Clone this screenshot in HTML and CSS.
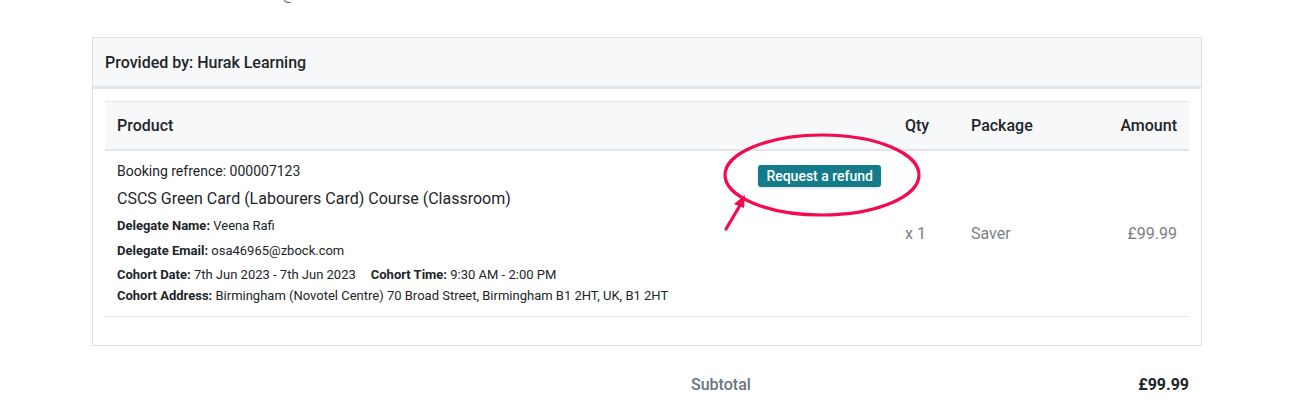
FILE: index.html
```html
<!DOCTYPE html>
<html>
<head>
<meta charset="utf-8">
<link rel="stylesheet" href="styles.css">
</head>
<body>
<div class="page">
  <div class="top-line"><span class="top-text">osa46965@zbock.com</span></div>
  <div class="card">
    <div class="card-header">Provided by: Hurak Learning</div>
    <div class="card-body">
      <div class="table">
        <div class="thead">
          <div class="th">Product</div>
          <div class="th">Qty</div>
          <div class="th">Package</div>
          <div class="th right">Amount</div>
        </div>
        <div class="trow">
          <div class="td product">
            <button class="refund">Request a refund</button>
            <div class="ref">Booking refrence: 000007123</div>
            <div class="title">CSCS Green Card (Labourers Card) Course (Classroom)</div>
            <div class="meta first"><b>Delegate Name:</b> Veena Rafi</div>
            <div class="meta"><b>Delegate Email:</b> osa46965@zbock.com</div>
            <div class="meta tight"><span class="pair"><b>Cohort Date:</b> 7th Jun 2023 - 7th Jun 2023</span><span class="pair"><b>Cohort Time:</b> 9:30 AM - 2:00 PM</span></div>
            <div class="meta tight2"><b>Cohort Address:</b> Birmingham (Novotel Centre) 70 Broad Street, Birmingham B1 2HT, UK, B1 2HT</div>
            <svg class="annot" width="220" height="110" viewBox="0 0 220 110">
              <ellipse cx="105" cy="42" rx="97" ry="40" fill="none" stroke="#f5094f" stroke-width="3.2"/>
              <line x1="9" y1="96" x2="25" y2="69" stroke="#f5094f" stroke-width="3.2" stroke-linecap="round"/>
              <polygon points="28,62 17,71 27,75" fill="#f5094f"/>
            </svg>
          </div>
          <div class="td muted mid">x 1</div>
          <div class="td muted mid">Saver</div>
          <div class="td muted mid right">£99.99</div>
        </div>
      </div>
    </div>
  </div>
  <div class="totals">
    <div class="label">Subtotal</div>
    <div class="value">£99.99</div>
  </div>
</div>
</body>
</html>
```

FILE: styles.css
```css
* { box-sizing: border-box; }
html, body { margin: 0; padding: 0; background: #fff; }
body {
  font-family: Roboto, "Liberation Sans", Arial, sans-serif;
  color: #212529;
  width: 1306px;
  height: 408px;
  overflow: hidden;
}
.page {
  margin-left: 92px;
  width: 1110px;
}
.top-line {
  height: 37px;
  overflow: hidden;
}
.top-text {
  display: block;
  margin-top: -13px;
  margin-left: 128px;
  font-size: 14px;
  line-height: 16px;
  color: #555;
}
.card {
  border: 1px solid #dee2e6;
}
.card-header {
  background: #f7f8fa;
  height: 51px;
  padding: 0 12px;
  display: flex;
  align-items: center;
  font-size: 16px;
  font-weight: 500;
  border-bottom: 3px solid #e1e4e8;
}
.card-body {
  padding: 12px 12px 28px 12px;
}
.table {
  display: grid;
  grid-template-columns: 1fr 66px 110px 120px;
}
.thead, .trow { display: contents; }
.th {
  background: #f7f8fa;
  border-top: 1px solid #e3e6ea;
  border-bottom: 2px solid #e1e4e8;
  height: 50px;
  padding: 0 12px;
  display: flex;
  align-items: center;
  font-size: 16px;
  font-weight: 500;
}
.th.right { justify-content: flex-end; }
.td {
  border-bottom: 1px solid #e3e6ea;
  padding: 12px 12px 12px 12px;
}
.td.mid {
  display: flex;
  align-items: center;
  font-size: 16px;
  padding-top: 12px;
}
.td.right { justify-content: flex-end; }
.muted { color: #7b7f84; }
.product { position: relative; padding-bottom: 13px; }
.refund {
  float: right;
  margin-top: 2px;
  background: #137b89;
  color: #fff;
  border: 0;
  border-radius: 3px;
  font-family: Roboto, "Liberation Sans", Arial, sans-serif;
  font-size: 14px;
  font-weight: 500;
  height: 22px;
  padding: 0 8px;
  box-shadow: 0 1px 3px rgba(0,0,0,0.15);
}
.ref {
  font-size: 14px;
  line-height: 16px;
}
.title {
  font-size: 16px;
  line-height: 20px;
  margin-top: 10px;
}
.meta {
  font-size: 13px;
  line-height: 15px;
  margin-top: 10px;
}
.meta.first { margin-top: 9px; }
.meta b { font-weight: 700; }
.meta.tight { margin-top: 9px; }
.meta.tight2 { margin-top: 6px; }
.pair + .pair { margin-left: 15px; }
.annot {
  position: absolute;
  left: 612px;
  top: -18px;
  pointer-events: none;
}
.totals {
  display: flex;
  justify-content: space-between;
  margin-left: 599px;
  width: 498px;
  margin-top: 29px;
  font-size: 16px;
  font-weight: 500;
}
.totals .label { color: #6c757d; }
.totals .value { font-weight: 700; }
```
